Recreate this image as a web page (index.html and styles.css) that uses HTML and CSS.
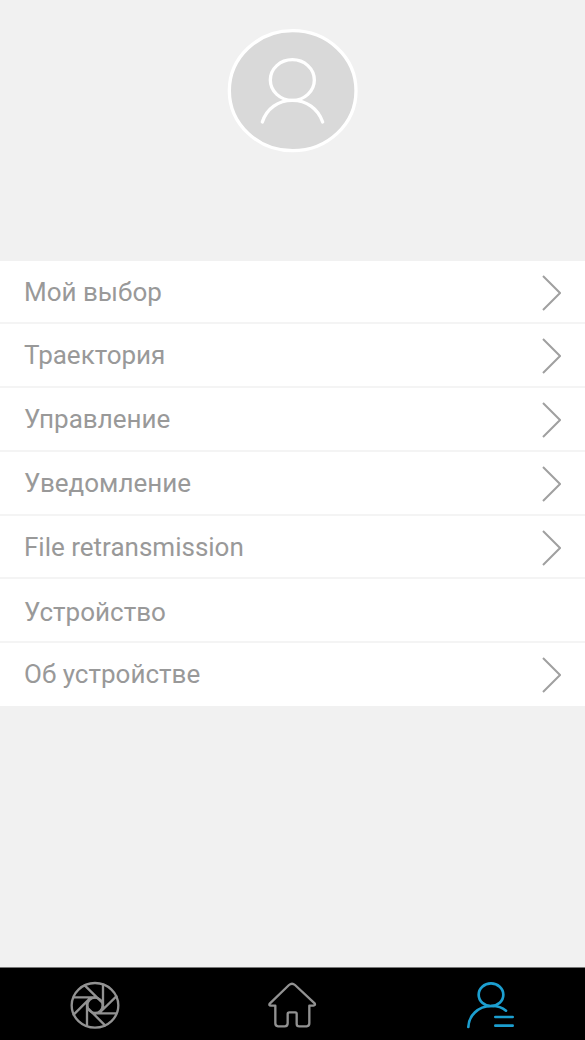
FILE: index.html
```html
<!DOCTYPE html>
<html lang="ru">
<head>
<meta charset="utf-8">
<meta name="viewport" content="width=device-width, initial-scale=1">
<title>Профиль</title>
<link rel="stylesheet" href="styles.css">
</head>
<body>
<div class="app">
  <header class="profile">
    <button class="avatar" type="button" aria-label="Аватар">
      <svg viewBox="0 0 390 372" aria-hidden="true">
        <ellipse class="avatar-disc" cx="194" cy="185" rx="190" ry="180"/>
        <ellipse cx="193" cy="153" rx="66" ry="61"/>
        <path d="M103 279C116 238 151 214 193 214S270 238 284 279"/>
      </svg>
    </button>
  </header>
  <main>
    <ul class="menu">
      <li><a class="row" href="#favorites">Мой выбор<svg class="chevron" viewBox="0 0 20 36" aria-hidden="true"><path d="M2 1 19 18 2 35"/></svg></a></li>
      <li><a class="row" href="#track">Траектория<svg class="chevron" viewBox="0 0 20 36" aria-hidden="true"><path d="M2 1 19 18 2 35"/></svg></a></li>
      <li><a class="row" href="#control">Управление<svg class="chevron" viewBox="0 0 20 36" aria-hidden="true"><path d="M2 1 19 18 2 35"/></svg></a></li>
      <li><a class="row" href="#notice">Уведомление<svg class="chevron" viewBox="0 0 20 36" aria-hidden="true"><path d="M2 1 19 18 2 35"/></svg></a></li>
      <li><a class="row row-short" href="#files">File retransmission<svg class="chevron" viewBox="0 0 20 36" aria-hidden="true"><path d="M2 1 19 18 2 35"/></svg></a></li>
      <li><a class="row row-plain" href="#device">Устройство</a></li>
      <li><a class="row row-short" href="#about">Об устройстве<svg class="chevron" viewBox="0 0 20 36" aria-hidden="true"><path d="M2 1 19 18 2 35"/></svg></a></li>
    </ul>
  </main>
  <nav class="tabs">
    <a class="tab" href="#camera" aria-label="Камера">
      <svg viewBox="0 0 240 216" aria-hidden="true">
        <ellipse cx="120" cy="112" rx="70" ry="67"/>
        <circle cx="120" cy="112" r="23"/>
        <path d="M89 52 138 100M144 50V117M184 85 133 135M182 136H116M150 172 102 124M96 173V108M56 140 107 89M58 88H124"/>
      </svg>
    </a>
    <a class="tab" href="#home" aria-label="Главная">
      <svg viewBox="-5 0 240 216" aria-hidden="true">
        <path d="M103 51Q112 43 121 51L180 106Q183 112 176 113H164V166Q164 174 156 175H134Q126 175 126 167V137Q126 133 122 133H104Q99 133 99 138V166Q99 175 90 175H70Q62 174 62 166V113H49Q41 112 46 106Z"/>
      </svg>
    </a>
    <a class="tab tab-active" href="#profile" aria-label="Профиль" aria-current="page">
      <svg viewBox="0 0 240 216" aria-hidden="true">
        <ellipse cx="123" cy="80" rx="37" ry="34"/>
        <path d="M55 177C56 145 83 114 123 114Q150 113 168 128M136 147H188M136 173H188"/>
      </svg>
    </a>
  </nav>
</div>
</body>
</html>
```
FILE: styles.css
```css
* {
  box-sizing: border-box;
}

body {
  margin: 0;
  background: #f1f1f1;
  font-family: Roboto, "Noto Sans", sans-serif;
}

.app {
  display: flex;
  flex-direction: column;
  min-height: 100vh;
}

main {
  flex: 1;
}

.profile {
  display: flex;
  justify-content: center;
  padding: 29px 0 108px;
}

.avatar {
  padding: 0;
  border: 0;
  background: none;
}

.avatar svg {
  display: block;
  width: 130px;
  height: 124px;
  overflow: visible;
  fill: none;
  stroke: #fff;
  stroke-width: 10;
  stroke-linecap: round;
}

.avatar .avatar-disc {
  fill: #d9d9d9;
}

.menu {
  margin: 0;
  padding: 0;
  list-style: none;
  background: #fff;
}

.row {
  display: flex;
  align-items: center;
  justify-content: space-between;
  height: 64px;
  padding: 0 24px;
  border-bottom: 2px solid #f4f4f4;
  color: #999;
  font-size: 26px;
  line-height: 32px;
  text-decoration: none;
}

.menu li:first-child .row,
.row-short {
  height: 63px;
}

.menu li:last-child .row {
  border-bottom: 0;
  padding-bottom: 2px;
}

.row-plain {
  padding-top: 3px;
}

.chevron {
  width: 20px;
  height: 36px;
  margin-top: 2px;
  fill: none;
  stroke: #a0a0a0;
  stroke-width: 2;
}

.tabs {
  display: flex;
  justify-content: space-between;
  padding: 0 55px;
  border-top: 1px solid #777;
  background: #000;
}

.tab {
  color: #929292;
}

.tab svg {
  display: block;
  width: 80px;
  height: 72px;
  fill: none;
  stroke: currentColor;
  stroke-width: 7;
  stroke-linecap: round;
  stroke-linejoin: round;
}

.tab-active {
  color: #1c9fd0;
}

.tab-active svg {
  stroke-width: 8;
}
```
